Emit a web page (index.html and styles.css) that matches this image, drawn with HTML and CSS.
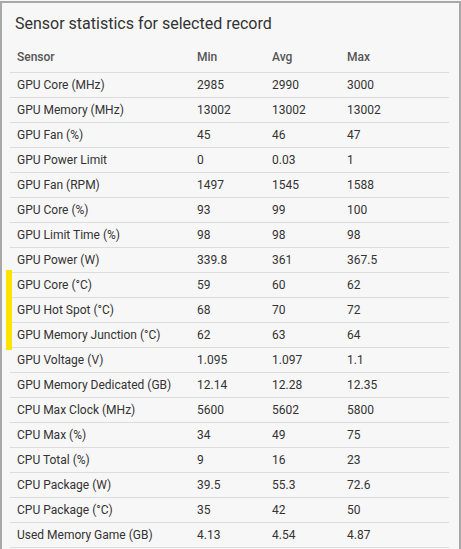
FILE: index.html
```html
<!DOCTYPE html>
<html>
<head>
<meta charset="utf-8">
<link rel="stylesheet" href="styles.css">
</head>
<body>
<div class="panel">
  <h2 class="title">Sensor statistics for selected record</h2>
  <table class="stats">
    <thead>
      <tr><th class="c-name">Sensor</th><th class="c-min">Min</th><th class="c-avg">Avg</th><th class="c-max">Max</th></tr>
    </thead>
    <tbody>
      <tr><td>GPU Core (MHz)</td><td>2985</td><td>2990</td><td>3000</td></tr>
      <tr><td>GPU Memory (MHz)</td><td>13002</td><td>13002</td><td>13002</td></tr>
      <tr><td>GPU Fan (%)</td><td>45</td><td>46</td><td>47</td></tr>
      <tr><td>GPU Power Limit</td><td>0</td><td>0.03</td><td>1</td></tr>
      <tr><td>GPU Fan (RPM)</td><td>1497</td><td>1545</td><td>1588</td></tr>
      <tr><td>GPU Core (%)</td><td>93</td><td>99</td><td>100</td></tr>
      <tr><td>GPU Limit Time (%)</td><td>98</td><td>98</td><td>98</td></tr>
      <tr><td>GPU Power (W)</td><td>339.8</td><td>361</td><td>367.5</td></tr>
      <tr class="hl hl-first"><td>GPU Core (°C)</td><td>59</td><td>60</td><td>62</td></tr>
      <tr class="hl"><td>GPU Hot Spot (°C)</td><td>68</td><td>70</td><td>72</td></tr>
      <tr class="hl hl-last"><td>GPU Memory Junction (°C)</td><td>62</td><td>63</td><td>64</td></tr>
      <tr><td>GPU Voltage (V)</td><td>1.095</td><td>1.097</td><td>1.1</td></tr>
      <tr><td>GPU Memory Dedicated (GB)</td><td>12.14</td><td>12.28</td><td>12.35</td></tr>
      <tr><td>CPU Max Clock (MHz)</td><td>5600</td><td>5602</td><td>5800</td></tr>
      <tr><td>CPU Max (%)</td><td>34</td><td>49</td><td>75</td></tr>
      <tr><td>CPU Total (%)</td><td>9</td><td>16</td><td>23</td></tr>
      <tr><td>CPU Package (W)</td><td>39.5</td><td>55.3</td><td>72.6</td></tr>
      <tr><td>CPU Package (°C)</td><td>35</td><td>42</td><td>50</td></tr>
      <tr><td>Used Memory Game (GB)</td><td>4.13</td><td>4.54</td><td>4.87</td></tr>
    </tbody>
  </table>
</div>
</body>
</html>
```

FILE: styles.css
```css
html, body {
  margin: 0;
  padding: 0;
  background: #f7f7f7;
}
body {
  font-family: Roboto, "Liberation Sans", Arial, sans-serif;
  color: #333;
}
.panel {
  margin-top: 1px;
  border: 2px solid #a8a8a8;
  border-bottom: none;
  background: #f7f7f7;
  padding: 0 10px 0 8px;
  height: 560px;
  box-sizing: border-box;
}
.title {
  margin: 0;
  padding: 11px 0 0 5px;
  height: 42px;
  box-sizing: border-box;
  font-size: 16px;
  font-weight: 400;
  color: #333;
  line-height: 20px;
}
.stats {
  width: 439px;
  border-collapse: collapse;
  table-layout: fixed;
  font-size: 12px;
}
.stats th, .stats td {
  height: 24px;
  padding: 0 0 0 7px;
  text-align: left;
  border-bottom: 1px solid #dcdcdc;
  white-space: nowrap;
}
.stats th {
  font-weight: 500;
  color: #555;
  padding-bottom: 3px;
}
.c-name { width: 173px; }
.c-min { width: 68px; }
.c-avg { width: 68px; }
.stats tr.hl td:first-child {
  position: relative;
}
.stats tr.hl td:first-child::before {
  content: "";
  position: absolute;
  left: -4px;
  top: -1px;
  bottom: -1px;
  width: 6px;
  background: #fce300;
}
.stats tr.hl-first td:first-child::before { top: -3px; }
.stats tr.hl-last td:first-child::before { bottom: -3px; }
```
